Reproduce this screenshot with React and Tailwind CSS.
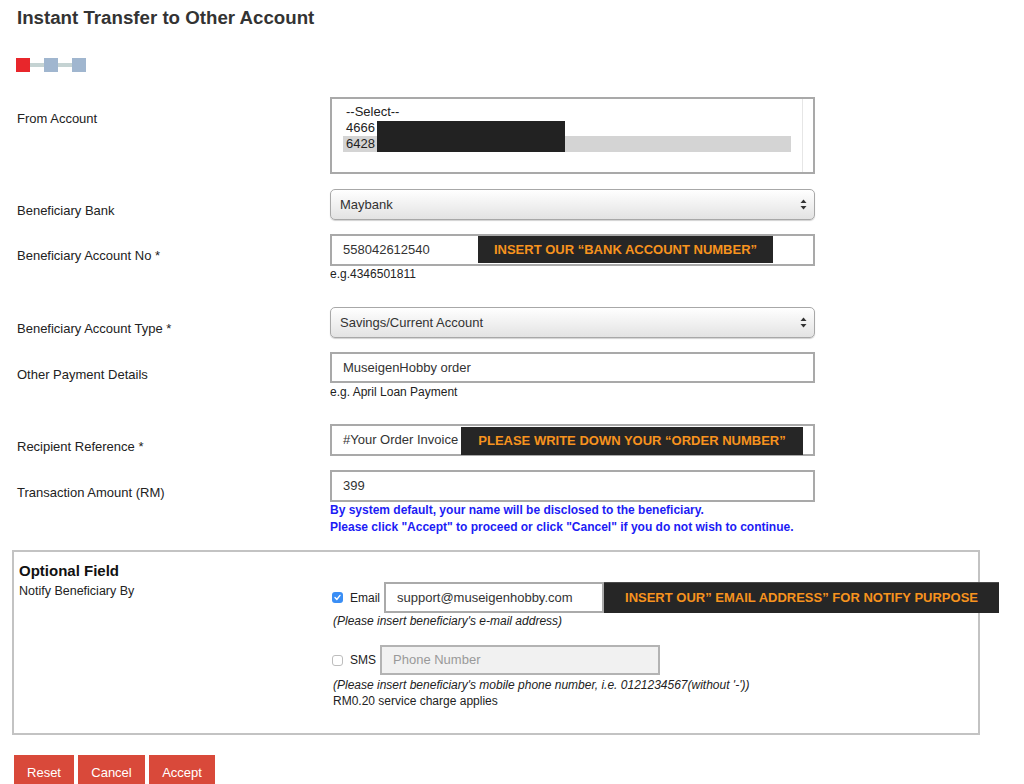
const Arrows = () => (
  <svg width="7" height="11" viewBox="0 0 7 11" className="shrink-0">
    <path d="M3.5 0.5 L6.5 4 L0.5 4 Z" fill="#333" />
    <path d="M3.5 10.5 L6.5 7 L0.5 7 Z" fill="#333" />
  </svg>
);

const Row = ({ label, labelPt = "pt-[14px]", mt, children }) => (
  <div className={`ml-[17px] flex items-start ${mt}`}>
    <div className={`w-[313px] shrink-0 text-[13px] leading-4 text-[#222] ${labelPt}`}>{label}</div>
    <div className="w-[485px] shrink-0">{children}</div>
  </div>
);

const SelectBox = ({ value }) => (
  <div className="h-[31px] rounded-[5px] border border-[#a8a8a8] bg-linear-to-b from-white to-[#e3e3e3] shadow-[0_1px_1px_rgba(0,0,0,0.18)] flex items-center pl-[9px] pr-[7px] text-[13px] text-[#333]">
    <span className="flex-1">{value}</span>
    <Arrows />
  </div>
);

const Overlay = ({ children, className }) => (
  <div className={`bg-[#262626] flex items-center justify-center text-[#f7931e] font-bold text-[13px] whitespace-nowrap ${className}`}>
    {children}
  </div>
);

export default function App() {
  return (
    <div className="w-[1024px] h-[784px] overflow-hidden bg-white font-['Liberation_Sans',Arial,sans-serif] text-[#222]">
      <h1 className="ml-[17px] pt-[7px] text-[18.7px] leading-[22px] font-bold text-[#333]">
        Instant Transfer to Other Account
      </h1>

      <div className="ml-[16px] mt-[29px] flex items-center">
        <div className="w-[14px] h-[14px] bg-[#e8262b]" />
        <div className="w-[14px] h-[4px] bg-[#c5d3d3]" />
        <div className="w-[14px] h-[14px] bg-[#a0b6cf]" />
        <div className="w-[14px] h-[4px] bg-[#c5d3d3]" />
        <div className="w-[14px] h-[14px] bg-[#a0b6cf]" />
      </div>

      <Row label="From Account" labelPt="pt-[14px]" mt="mt-[25px]">
        <div className="relative h-[77px] border-2 border-[#a9a9a9] bg-white pl-[11px] pt-[5px] text-[13px] leading-4 text-[#222]">
          <div className="pl-[3px]">--Select--</div>
          <div className="pl-[3px]">4666</div>
          <div className="pl-[3px] bg-[#d4d4d4] w-[448px]">6428</div>
          <div className="absolute left-[45px] top-[22px] w-[188px] h-[31px] bg-[#222]" />
          <div className="absolute right-[10px] top-0 bottom-0 w-px bg-[#e6e6e6]" />
        </div>
      </Row>

      <Row label="Beneficiary Bank" labelPt="pt-[14px]" mt="mt-[15px]">
        <SelectBox value="Maybank" />
      </Row>

      <Row label="Beneficiary Account No *" mt="mt-[14px]">
        <div className="relative h-[32px] border-2 border-[#a9a9a9] bg-white pl-[11px] flex items-center text-[13px] text-[#333]">
          558042612540
          <Overlay className="absolute left-[146px] top-0 w-[295px] h-[27px]">
            INSERT OUR “BANK ACCOUNT NUMBER”
          </Overlay>
        </div>
        <div className="mt-[1px] text-[12px] leading-[14px] text-[#222]">e.g.4346501811</div>
      </Row>

      <Row label="Beneficiary Account Type *" labelPt="pt-[14px]" mt="mt-[26px]">
        <SelectBox value="Savings/Current Account" />
      </Row>

      <Row label="Other Payment Details" labelPt="pt-[15px]" mt="mt-[14px]">
        <div className="h-[31px] border-2 border-[#a9a9a9] bg-white pl-[11px] flex items-center text-[13px] text-[#333]">
          MuseigenHobby order
        </div>
        <div className="mt-[2px] text-[12px] leading-[14px] text-[#222]">e.g. April Loan Payment</div>
      </Row>

      <Row label="Recipient Reference *" labelPt="pt-[15px]" mt="mt-[25px]">
        <div className="relative h-[32px] border-2 border-[#a9a9a9] bg-white pl-[11px] flex items-center text-[13px] text-[#333]">
          #Your Order Invoice
          <Overlay className="absolute left-[129px] top-[1px] w-[342px] h-[28px]">
            PLEASE WRITE DOWN YOUR “ORDER NUMBER”
          </Overlay>
        </div>
      </Row>

      <Row label="Transaction Amount (RM)" labelPt="pt-[15px]" mt="mt-[14px]">
        <div className="h-[32px] border-2 border-[#a9a9a9] bg-white pl-[11px] flex items-center text-[13px] text-[#333]">
          399
        </div>
      </Row>

      <div className="ml-[330px] text-[12px] font-bold leading-[17px] text-[#1c1cf5]">
        <div>By system default, your name will be disclosed to the beneficiary.</div>
        <div>Please click "Accept" to proceed or click "Cancel" if you do not wish to continue.</div>
      </div>

      <div className="ml-[12px] mt-[14px] w-[968px] h-[185px] border-2 border-[#c3c3c3] pl-[5px] pt-[10px]">
        <div className="text-[15px] font-bold leading-[18px] text-[#111]">Optional Field</div>
        <div className="mt-[2px] flex items-start">
          <div className="w-[313px] shrink-0 pt-[1px] text-[12.5px] leading-4 text-[#222]">Notify Beneficiary By</div>
          <div className="flex flex-col">
            <div className="flex items-center h-[31px]">
              <div className="w-[11px] h-[11px] rounded-[3px] bg-[#3a8ef5] flex items-center justify-center">
                <svg width="9" height="9" viewBox="0 0 9 9">
                  <path d="M2 4.6 L3.8 6.5 L7 2.4" stroke="white" strokeWidth="1.4" fill="none" strokeLinecap="round" strokeLinejoin="round" />
                </svg>
              </div>
              <span className="ml-[7px] text-[12px] text-[#222]">Email</span>
              <div className="ml-[4px] w-[220px] h-[31px] border-2 border-[#aaaaaa] bg-white pl-[11px] flex items-center text-[13px] text-[#333]">
                support@museigenhobby.com
              </div>
              <Overlay className="w-[395px] h-[31px] border-t border-[#4a4a4a]">
                INSERT OUR” EMAIL ADDRESS” FOR NOTIFY PURPOSE
              </Overlay>
            </div>
            <div className="mt-[1px] ml-[1px] text-[12px] italic leading-[14px] text-[#222]">
              (Please insert beneficiary's e-mail address)
            </div>
            <div className="mt-[17px] flex items-center h-[30px]">
              <div className="w-[11px] h-[11px] rounded-[3px] border border-[#bdbdbd] bg-white" />
              <span className="ml-[7px] text-[12px] text-[#222]">SMS</span>
              <div className="ml-[4px] w-[280px] h-[30px] border-2 border-[#b3b3b3] bg-[#f1f1f1] pl-[11px] flex items-center text-[13px] text-[#999]">
                Phone Number
              </div>
            </div>
            <div className="mt-[3px] ml-[1px] text-[12px] italic leading-[14px] text-[#222]">
              (Please insert beneficiary's mobile phone number, i.e. 0121234567(without '-'))
            </div>
            <div className="mt-[2px] ml-[1px] text-[12px] leading-[14px] text-[#222]">
              RM0.20 service charge applies
            </div>
          </div>
        </div>
      </div>

      <div className="ml-[14px] mt-[20px] flex gap-[4px]">
        <button className="w-[60px] h-[36px] bg-[#d9493a] text-white text-[13px]">Reset</button>
        <button className="w-[67px] h-[36px] bg-[#d9493a] text-white text-[13px]">Cancel</button>
        <button className="w-[66px] h-[36px] bg-[#d9493a] text-white text-[13px]">Accept</button>
      </div>
    </div>
  );
}
